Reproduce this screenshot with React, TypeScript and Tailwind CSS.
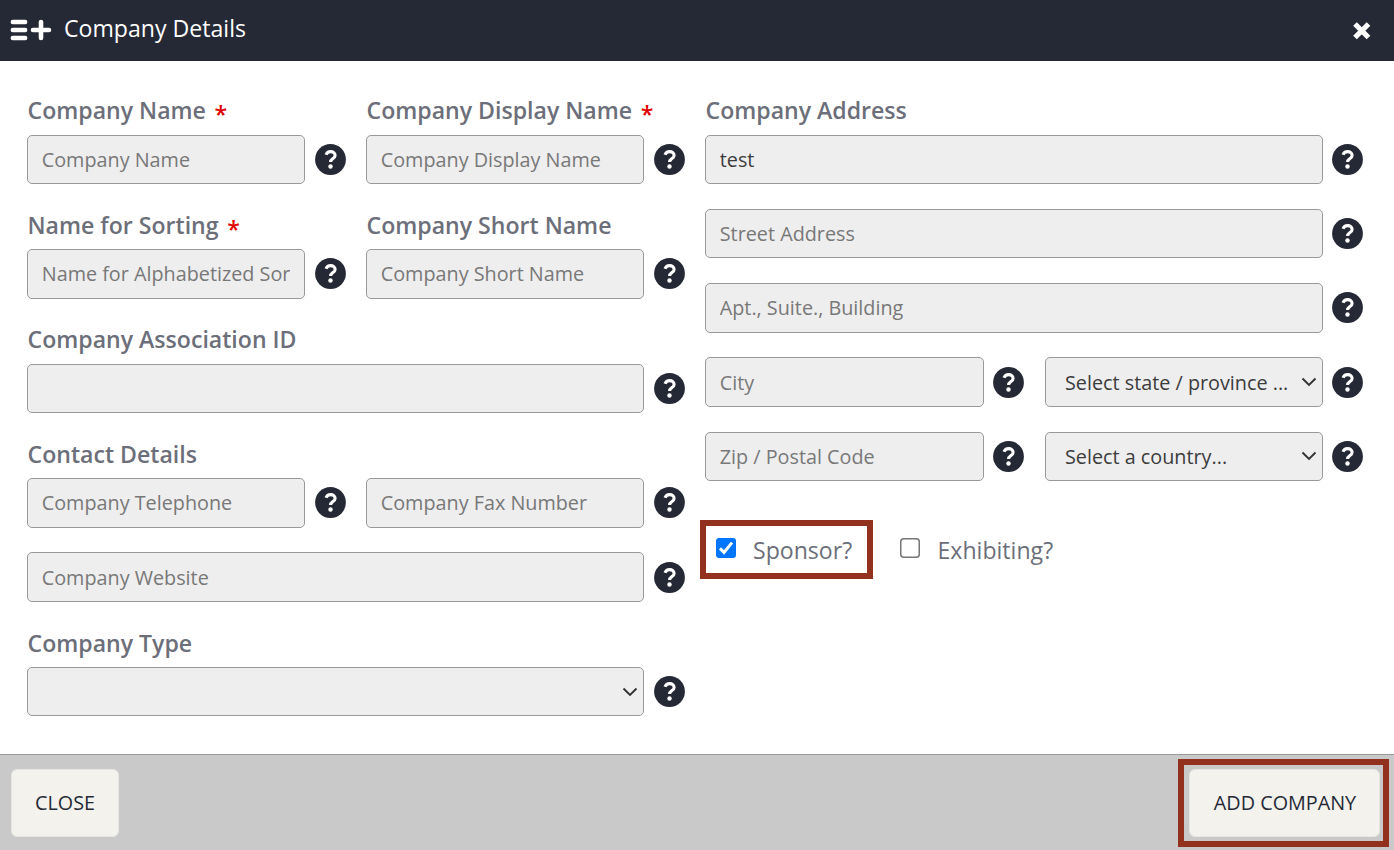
import React from "react";

function Help() {
  return (
    <svg viewBox="0 0 31 31" className="h-[31px] w-[31px] shrink-0">
      <circle cx="15.5" cy="15.5" r="15.4" fill="#252935" />
      <path d="M11 10.8C11.8 8.6 13.4 7.6 15.6 7.6c2.6 0 4.5 1.5 4.5 3.8 0 3.3-4.5 3.1-4.5 6.7" fill="none" stroke="#fff" strokeWidth="3.1" />
      <circle cx="15.5" cy="22.5" r="2.2" fill="#fff" />
    </svg>
  );
}

function Label({ children, required, leading = "leading-[32.4px]" }: { children: React.ReactNode; required?: boolean; leading?: string }) {
  return (
    <div className={"h-[40.25px] whitespace-nowrap pl-[0.5px] text-[23.1px] font-semibold text-[#6c6f7a] " + leading}>
      {children}
      {required && <span className="relative top-[4px] ml-[8.6px] text-[#e00000]">*</span>}
    </div>
  );
}

const box = "h-[49.4px] min-w-0 flex-1 rounded-[5px] border border-[#999] bg-[#eee] text-[19.8px] outline-none";

function Field({ placeholder, value, gap = "gap-[10px]" }: { placeholder?: string; value?: string; gap?: string }) {
  return (
    <div className={"flex min-w-0 flex-1 items-center " + gap}>
      <input className={box + " px-[13.75px] text-[#3c3c3c] placeholder:text-[#787878]"} placeholder={placeholder} defaultValue={value} />
      <Help />
    </div>
  );
}

function Dropdown({ text, gap = "gap-[10px]" }: { text?: string; gap?: string }) {
  return (
    <div className={"flex min-w-0 flex-1 items-center " + gap}>
      <div className={box + " flex items-center justify-between pl-[19px] pr-[5px] text-[#3c3c3c]"}>
        <span className="whitespace-nowrap pt-[1.4px]">{text}</span>
        <svg viewBox="0 0 16 10" className="h-[10px] w-4 shrink-0">
          <path d="M1.5 1.5 8 8l6.5-6.5" fill="none" stroke="#333" strokeWidth="1.9" />
        </svg>
      </div>
      <Help />
    </div>
  );
}

export default function App() {
  return (
    <div className="relative flex h-[850px] w-[1394px] flex-col overflow-hidden bg-white font-['Open_Sans','Noto_Sans',sans-serif]">
      <header className="flex h-[61px] items-center justify-between bg-[#252935] pl-[10px] pr-[22px] text-white">
        <div className="flex items-center">
          <svg viewBox="0 0 42 22" className="mb-[1px] h-[22px] w-[42px]" fill="none" stroke="#fff" strokeLinecap="round">
            <path d="M2.8 3h12.4M2.8 11h12.4M2.8 19h12.4" strokeWidth="4.4" />
            <path d="M23 11h16M31 3v16" strokeWidth="4.6" />
          </svg>
          <h1 className="ml-3 pb-[4px] text-[23.1px]">Company Details</h1>
        </div>
        <svg viewBox="0 0 20 20" className="h-5 w-5">
          <path d="m3 3 13.5 13.5M16.5 3 3 16.5" stroke="#fff" strokeWidth="5.2" />
        </svg>
      </header>

      <main className="flex h-[693px] pl-[27px] pr-[31px] pt-[33.55px]">
        <section className="flex w-[658px] flex-col gap-[24.8px]">
          <div className="grid grid-cols-2 gap-5">
            <div><Label required leading="leading-[31px]">Company Name</Label><Field placeholder="Company Name" /></div>
            <div><Label required leading="leading-[31px]">Company Display Name</Label><Field placeholder="Company Display Name" /></div>
          </div>
          <div className="grid grid-cols-2 gap-5">
            <div><Label required>Name for Sorting</Label><Field placeholder="Name for Alphabetized Sorting" /></div>
            <div><Label>Company Short Name</Label><Field placeholder="Company Short Name" /></div>
          </div>
          <div><Label>Company Association ID</Label><Field /></div>
          <div>
            <Label>Contact Details</Label>
            <div className="grid grid-cols-2 gap-5"><Field placeholder="Company Telephone" /><Field placeholder="Company Fax Number" /></div>
          </div>
          <div className="flex pt-[0.12px]"><Field placeholder="Company Website" /></div>
          <div><Label>Company Type</Label><Dropdown /></div>
        </section>

        <section className="ml-5 flex w-[658px] flex-col gap-[24.8px]">
          <div><Label leading="leading-[31px]">Company Address</Label><Field gap="gap-[9px]" value="test" /></div>
          <div className="flex"><Field gap="gap-[9px]" placeholder="Street Address" /></div>
          <div className="flex"><Field gap="gap-[9px]" placeholder="Apt., Suite., Building" /></div>
          <div className="grid grid-cols-[319px_318px] gap-[21px]">
            <Field gap="gap-[9px]" placeholder="City" />
            <Dropdown gap="gap-[9px]" text="Select state / province ..." />
          </div>
          <div className="grid grid-cols-[319px_318px] gap-[21px]">
            <Field gap="gap-[9px]" placeholder="Zip / Postal Code" />
            <Dropdown gap="gap-[9px]" text="Select a country..." />
          </div>
          <div className="mt-[28px] flex text-[23.1px] leading-[33px] text-[#6c6f7a]">
            <label className="ml-[11px] flex w-[184px]">
              <svg viewBox="0 0 20 20" className="mr-[17px] mt-[4px] h-5 w-5">
                <rect width="20" height="20" rx="3" fill="#0075ff" />
                <path d="m4 10.4 4 4L16 4.6" fill="none" stroke="#fff" strokeWidth="3" />
              </svg>
              Sponsor?
            </label>
            <label className="flex">
              <svg viewBox="0 0 20 20" className="mr-[17.5px] mt-[4px] h-5 w-5">
                <rect x=".75" y=".75" width="18.5" height="18.5" rx="3" fill="#fff" stroke="#767676" strokeWidth="1.5" />
              </svg>
              Exhibiting?
            </label>
          </div>
        </section>
      </main>

      <footer className="flex h-24 items-start justify-between border-t border-[#999] bg-[#c9c9c9] pl-[11px] pr-[14px] pt-[14px] text-[19.8px] text-[#252935]">
        <button className="h-[68px] w-[108px] rounded-[6px] border border-[#e6e5df] bg-[#f3f2ed]">CLOSE</button>
        <button className="h-[68px] w-[191px] rounded-[6px] border border-[#e6e5df] bg-[#f3f2ed] pl-[1px]">ADD COMPANY</button>
      </footer>

      <div className="pointer-events-none absolute left-[700px] top-[520px] h-[59px] w-[173px] border-[6px] border-[#93311f]" />
      <div className="pointer-events-none absolute left-[1178px] top-[759px] h-[88px] w-[211px] border-[6px] border-[#93311f]" />
    </div>
  );
}
